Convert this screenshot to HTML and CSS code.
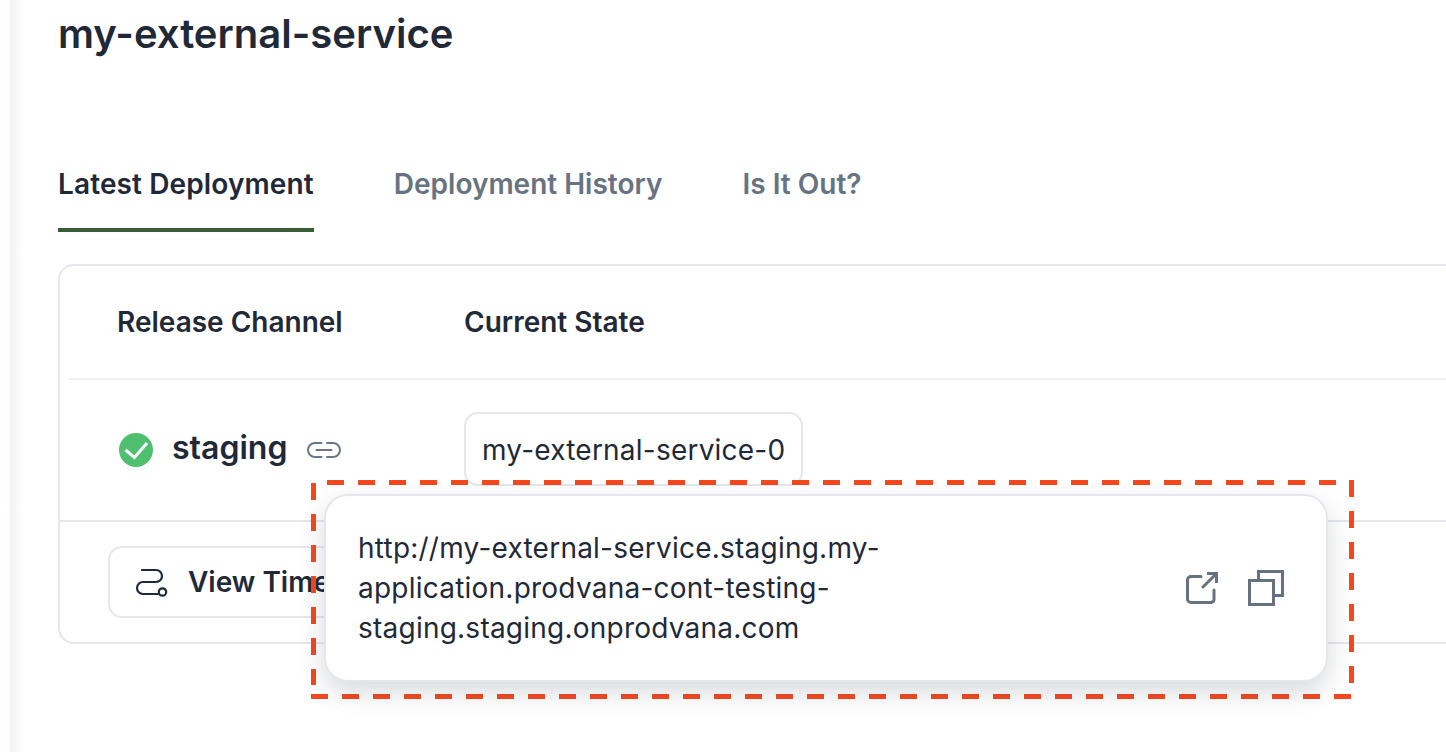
FILE: index.html
```html
<!DOCTYPE html>
<html lang="en">
<head>
<meta charset="utf-8">
<title>my-external-service</title>
<link rel="stylesheet" href="styles.css">
</head>
<body>
<div class="page">
  <div class="edge"></div>
  <main class="main">
    <h1 class="title">my-external-service</h1>
    <nav class="tabs">
      <span class="tab active">Latest Deployment</span>
      <span class="tab">Deployment History</span>
      <span class="tab">Is It Out?</span>
    </nav>
    <section class="card">
      <div class="head">
        <div class="col-a">Release Channel</div>
        <div class="col-b">Current State</div>
      </div>
      <div class="row">
        <div class="col-a channel">
          <svg class="check" width="34" height="34" viewBox="0 0 34 34"><circle cx="17" cy="17" r="17" fill="#4fbf70"/><path d="M6.500 17l9 7.500L28 10" fill="none" stroke="#fff" stroke-width="3"/></svg>
          <span class="channel-name">staging</span>
          <svg class="link" width="36" height="18" viewBox="0 0 36 18" fill="none" stroke="#6b7785" stroke-width="2" stroke-linecap="round"><path d="M15.500 2H9a7 7 0 0 0 0 14h6.500"/><path d="M21 2h6a7 7 0 0 1 0 14h-6"/><path d="M10.500 9h15"/></svg>
        </div>
        <div class="col-b"><span class="state">my-external-service-0</span></div>
      </div>
      <div class="foot">
        <button class="timeline">
          <svg width="34" height="30" viewBox="0 0 34 30" fill="none" stroke="#1f2937" stroke-width="2.200" stroke-linecap="round"><path d="M7 3H21a6 6 0 0 1 0 12H8a6 6 0 0 0 0 12H23"/><circle cx="27.500" cy="25" r="3.700"/></svg>
          <span>View Timeline</span>
        </button>
      </div>
    </section>
  </main>
  <svg class="highlight" width="1043" height="219" viewBox="0 0 1043 219" fill="none" stroke="#f4481e" stroke-width="5" stroke-dasharray="17 14">
    <path d="M16 2.500H1025"/>
    <path d="M1040.500 0V203"/>
    <path d="M1040 216.500H0"/>
    <path d="M2.500 3V205"/>
  </svg>
  <div class="popover">
    <p class="url">http://my-external-service.staging.my-application.prodvana-cont-testing-staging.staging.onprodvana.com</p>
    <div class="actions">
      <svg width="32" height="32" viewBox="0 0 32 32" fill="none" stroke="#66727f" stroke-width="3"><path d="M15 4.500H5a3.500 3.500 0 0 0-3.500 3.500V27a3.500 3.500 0 0 0 3.500 3.500h20a3.500 3.500 0 0 0 3-3V18" stroke-linecap="round"/><path d="M17 15L30 2" stroke-linecap="round"/><path d="M21 1.500H30.500V11"/></svg>
      <svg width="36" height="36" viewBox="0 0 36 36" fill="none" stroke="#66727f" stroke-width="3"><rect x="1.500" y="10.500" width="24" height="24"/><path d="M10.500 9V1.500H34.500V25.500H27"/></svg>
    </div>
  </div>
</div>
</body>
</html>
```

FILE: styles.css
```css
* { box-sizing: border-box; }
html, body { margin: 0; height: 100%; background: #fff; overflow: hidden; }
body { font-family: Inter, "Liberation Sans", sans-serif; color: #1f2937; }
.page { position: relative; display: flex; width: 1446px; height: 752px; overflow: hidden; }
.edge { flex: 0 0 14px; margin-left: 10px; background: linear-gradient(90deg, #f1f2f4 0, #ffffff 100%); }
.main { flex: 1; min-width: 0; padding-left: 34px; }
.title { margin: 11px 0 0; font-size: 40px; line-height: 46px; font-weight: 600; white-space: nowrap; }
.tabs { display: flex; gap: 80px; margin-top: 110px; }
.tab { display: block; height: 65px; font-size: 28px; line-height: 34px; font-weight: 600; color: #677380; white-space: nowrap; border-bottom: 4px solid transparent; }
.tab.active { color: #1f2937; letter-spacing: 0.12px; border-bottom-color: #3a5b38; }
.card { width: 1500px; height: 380px; margin-top: 32px; border: 2px solid #e5e7eb; border-radius: 16px; padding-left: 8px; }
.head { display: flex; align-items: center; height: 114px; border-bottom: 2px solid #f0f1f3; font-size: 28px; font-weight: 600; }
.col-a { flex: 0 0 396px; padding-left: 49px; }
.channel { display: flex; align-items: center; height: 76px; }
.check { margin-left: 2px; }
.channel-name { margin: 0 0 6px 19px; font-size: 32px; font-weight: 600; }
.link { margin-left: 19px; }
.row { display: flex; align-items: flex-start; height: 142px; padding: 32px 0 0 8px; margin-left: -8px; border-bottom: 2px solid #e5e7eb; }
.state { display: inline-block; height: 74px; padding: 0 16px; font-size: 28px; letter-spacing: 0.22px; line-height: 72px; border: 2px solid #e5e7eb; border-radius: 14px; background: #fff; white-space: nowrap; }
.foot { padding: 24px 0 0 40px; }
.timeline { display: flex; align-items: center; gap: 19px; width: 400px; height: 72px; padding: 0 25px; background: #fff; border: 2px solid #e5e7eb; border-radius: 14px; font: 600 28px Inter, sans-serif; color: #1f2937; white-space: nowrap; }
.highlight { position: absolute; left: 311px; top: 480px; }
.popover { position: absolute; left: 324px; top: 494px; width: 1004px; height: 188px; display: flex; align-items: center; justify-content: space-between; padding: 0 42px 0 32px; background: #fff; border: 2px solid #e5e7eb; border-radius: 24px; box-shadow: 0 10px 26px rgba(55, 65, 81, 0.2); }
.url { width: 560px; margin: 0; font-size: 28px; letter-spacing: 0.23px; line-height: 40px; overflow-wrap: anywhere; }
.actions { display: flex; align-items: center; gap: 30px; }
```
